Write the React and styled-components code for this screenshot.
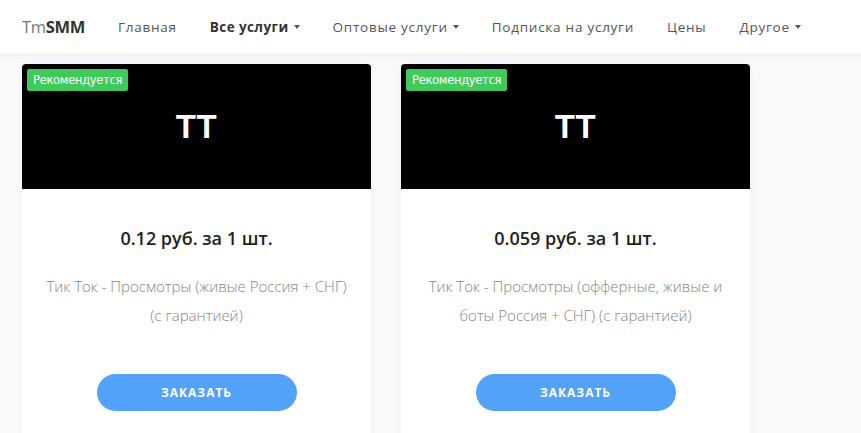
import React from 'react'
import styled, { createGlobalStyle } from 'styled-components'

const GlobalStyle = createGlobalStyle`
  html, body {
    margin: 0;
    padding: 0;
    background: #fafafd;
    font-family: 'Open Sans', 'Noto Sans', sans-serif;
  }
`

const Navbar = styled.nav`
  height: 53px;
  background: #fff;
  display: flex;
  align-items: center;
  padding: 0 22px;
  border-bottom: 6px solid #f5f5f8;
`

const Brand = styled.a`
  font-size: 16.5px;
  color: #777;
  font-weight: 400;
  margin-right: 33px;
  letter-spacing: -0.3px;

  b {
    color: #333;
    font-weight: 700;
  }
`

const NavItem = styled.a`
  font-size: 13.5px;
  letter-spacing: ${(p) => (p.active ? '0.4px' : '0.75px')};
  color: ${(p) => (p.active ? '#333' : '#555')};
  font-weight: ${(p) => (p.active ? 700 : 400)};
  margin-right: 33px;
  display: flex;
  align-items: center;
  white-space: nowrap;
`

const Caret = styled.span`
  display: inline-block;
  margin-left: 5px;
  width: 0;
  height: 0;
  border-left: 3.5px solid transparent;
  border-right: 3.5px solid transparent;
  border-top: 4px solid #555;
`

const Grid = styled.main`
  display: grid;
  grid-template-columns: repeat(2, 349px);
  gap: 30px;
  padding: 5px 22px 0;
`

const Card = styled.div`
  background: #fff;
  border-radius: 4px;
  overflow: hidden;
  box-shadow: 0 0 10px rgba(40, 40, 80, 0.04);
  height: 380px;
`

const Cover = styled.div`
  position: relative;
  height: 125px;
  background: #000;
  display: flex;
  align-items: center;
  justify-content: center;
`

const CoverTitle = styled.span`
  color: #fff;
  font-family: 'Liberation Sans', Arial, sans-serif;
  font-weight: 700;
  font-size: 33px;
  letter-spacing: 0.5px;
`

const Badge = styled.span`
  position: absolute;
  top: 5px;
  left: 5px;
  background: #3fca5b;
  color: #fff;
  font-family: 'DejaVu Sans', sans-serif;
  font-size: 11.5px;
  line-height: 22px;
  padding: 0 6px;
  border-radius: 2px;
  letter-spacing: -0.3px;
`

const Body = styled.div`
  display: flex;
  flex-direction: column;
  align-items: center;
  padding: 37px 20px 0;
  text-align: center;
`

const Price = styled.div`
  font-size: 18px;
  font-weight: 600;
  color: #222;
  margin-bottom: 22px;
`

const Desc = styled.p`
  margin: 0;
  font-size: 15px;
  font-weight: 300;
  color: #858585;
  line-height: 29px;
  height: 58px;
  max-width: 309px;
`

const OrderButton = styled.button`
  margin-top: 44px;
  width: 200px;
  height: 37px;
  border: none;
  border-radius: 19px;
  background: #53a2fa;
  color: #fff;
  font-family: 'Open Sans', sans-serif;
  font-weight: 700;
  font-size: 12px;
  letter-spacing: 1px;
`

const cards = [
  {
    price: '0.12 руб. за 1 шт.',
    desc: 'Тик Ток - Просмотры (живые Россия + СНГ) (с гарантией)',
  },
  {
    price: '0.059 руб. за 1 шт.',
    desc: 'Тик Ток - Просмотры (офферные, живые и боты Россия + СНГ) (с гарантией)',
  },
]

const App = () => (
  <>
    <GlobalStyle />
    <Navbar>
      <Brand>
        Tm<b>SMM</b>
      </Brand>
      <NavItem>Главная</NavItem>
      <NavItem active>
        Все услуги <Caret />
      </NavItem>
      <NavItem>
        Оптовые услуги <Caret />
      </NavItem>
      <NavItem>Подписка на услуги</NavItem>
      <NavItem>Цены</NavItem>
      <NavItem>
        Другое <Caret />
      </NavItem>
    </Navbar>
    <Grid>
      {cards.map((c) => (
        <Card key={c.price}>
          <Cover>
            <Badge>Рекомендуется</Badge>
            <CoverTitle>TT</CoverTitle>
          </Cover>
          <Body>
            <Price>{c.price}</Price>
            <Desc>{c.desc}</Desc>
            <OrderButton>ЗАКАЗАТЬ</OrderButton>
          </Body>
        </Card>
      ))}
    </Grid>
  </>
)

export default App
